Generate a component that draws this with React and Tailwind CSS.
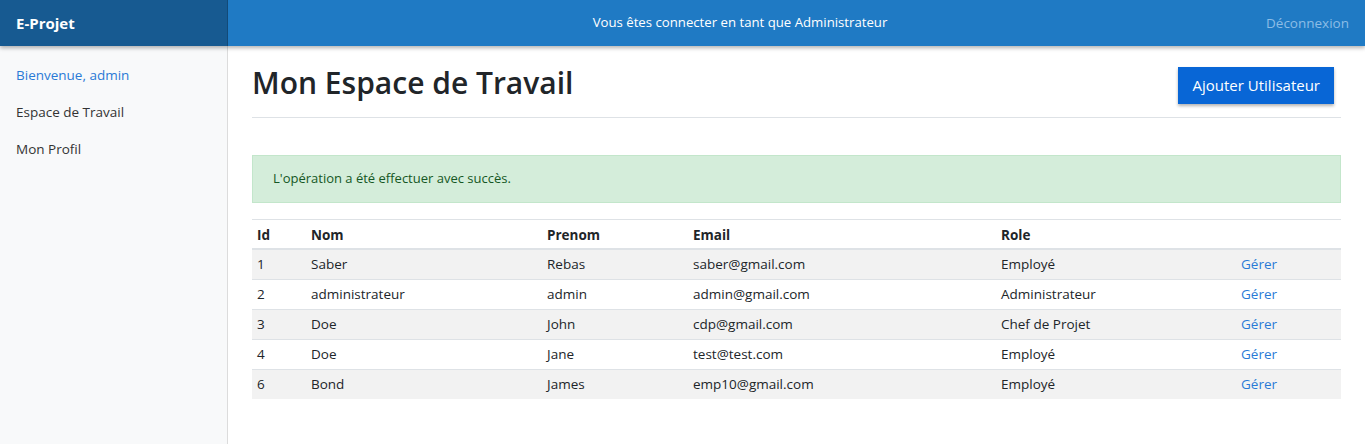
import React from 'react';

const users = [
  { id: 1, nom: 'Saber', prenom: 'Rebas', email: 'saber@gmail.com', role: 'Employé' },
  { id: 2, nom: 'administrateur', prenom: 'admin', email: 'admin@gmail.com', role: 'Administrateur' },
  { id: 3, nom: 'Doe', prenom: 'John', email: 'cdp@gmail.com', role: 'Chef de Projet' },
  { id: 4, nom: 'Doe', prenom: 'Jane', email: 'test@test.com', role: 'Employé' },
  { id: 6, nom: 'Bond', prenom: 'James', email: 'emp10@gmail.com', role: 'Employé' },
];

const App = () => {
  return (
    <div className="min-h-[444px] bg-white text-[14px] text-[#212529]" style={{ fontFamily: '"Open Sans", "Noto Sans", sans-serif' }}>
      {/* Navbar */}
      <nav className="relative z-10 flex h-[46px] bg-[#1f7ac4] shadow-[0_2px_4px_rgba(0,0,0,0.3)]">
        <div className="flex w-[228px] shrink-0 items-center bg-[#175a91] px-4 text-[15px] font-bold text-white border-r border-[#124a78]">
          E-Projet
        </div>
        <div className="flex flex-1 items-center justify-center pr-[14px] text-[13.2px] text-white">
          Vous êtes connecter en tant que Administrateur
        </div>
        <div className="flex items-center pr-4 text-[13.5px] text-[#8cbde6]">Déconnexion</div>
      </nav>

      <div className="flex">
        {/* Sidebar */}
        <aside className="min-h-[398px] w-[228px] shrink-0 border-r border-[#dcdcdc] bg-[#f8f9fa] pt-[10px] text-[13.5px]">
          <div className="px-4 py-[8.5px] leading-[20px] text-[#2a7ad6]">Bienvenue, admin</div>
          <div className="px-4 py-[8.5px] leading-[20px] text-[#333]">Espace de Travail</div>
          <div className="px-4 py-[8.5px] leading-[20px] text-[#333]">Mon Profil</div>
        </aside>

        {/* Main */}
        <main className="flex-1 px-6">
          <div className="flex items-start justify-between border-b border-[#dee2e6] pt-[21px] pb-[13px]">
            <h1 className="text-[30px] font-semibold leading-[32px] text-[#212529]">Mon Espace de Travail</h1>
            <button className="mr-[7px] h-[37px] bg-[#0866d6] px-[14px] text-[15px] text-white shadow-[0_2px_3px_rgba(0,0,0,0.3)]">
              Ajouter Utilisateur
            </button>
          </div>

          <div className="mt-[37px] border border-[#c3e6cb] bg-[#d4edda] px-5 py-[13px] text-[13px] text-[#155724]">
            L'opération a été effectuer avec succès.
          </div>

          <table className="mt-4 w-full table-fixed border-collapse text-[13.5px]">
            <colgroup>
              <col className="w-[54px]" />
              <col className="w-[236px]" />
              <col className="w-[146px]" />
              <col className="w-[308px]" />
              <col className="w-[240px]" />
              <col />
            </colgroup>
            <thead>
              <tr className="border-t border-[#dee2e6] border-b-2 border-b-[#dee2e6]">
                <th className="h-[30px] px-[5px] pt-[2px] text-left font-bold">Id</th>
                <th className="px-[5px] pt-[2px] text-left font-bold">Nom</th>
                <th className="px-[5px] pt-[2px] text-left font-bold">Prenom</th>
                <th className="px-[5px] pt-[2px] text-left font-bold">Email</th>
                <th className="px-[5px] pt-[2px] text-left font-bold">Role</th>
                <th className="px-[5px]"></th>
              </tr>
            </thead>
            <tbody>
              {users.map((u, i) => (
                <tr key={u.id} className={`border-t border-[#dee2e6] ${i % 2 === 0 ? 'bg-[#f2f2f2]' : 'bg-white'}`}>
                  <td className="h-[30px] px-[5px]">{u.id}</td>
                  <td className="px-[5px]">{u.nom}</td>
                  <td className="px-[5px]">{u.prenom}</td>
                  <td className="px-[5px]">{u.email}</td>
                  <td className="px-[5px]">{u.role}</td>
                  <td className="px-[5px] text-[#2a7ad6]">Gérer</td>
                </tr>
              ))}
            </tbody>
          </table>
        </main>
      </div>
    </div>
  );
};

export default App;
